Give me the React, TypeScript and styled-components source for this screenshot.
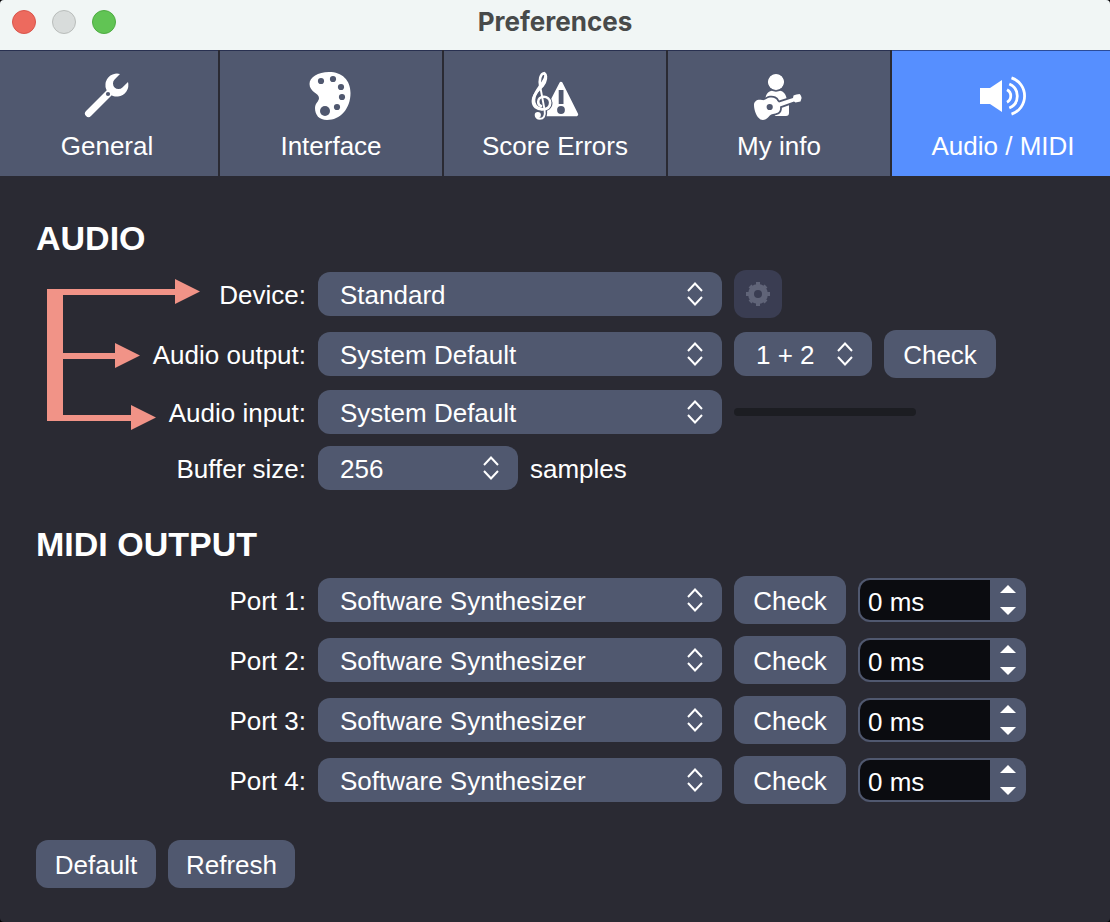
import React, { useState } from "react";
import styled, { createGlobalStyle, ThemeProvider } from "styled-components";

const theme = {
  page: "#2a2a33",
  control: "#50586f",
  controlDisabled: "#3a3d52",
  accent: "#568fff",
  field: "#0b0c10",
  track: "#1c1d22",
  arrow: "#f19387",
  titleBar: "#f1f6f5",
  titleText: "#484a4a",
};

const GlobalStyle = createGlobalStyle`
  *, *::before, *::after { box-sizing: border-box; }
  body {
    margin: 0;
    background: #000;
    color: #fff;
    font: 26px/32px "Liberation Sans", Arial, sans-serif;
  }
  button, input, select {
    margin: 0;
    border: 0;
    color: inherit;
    font: inherit;
  }
`;

const Window = styled.div`
  min-height: 100vh;
  display: flex;
  flex-direction: column;
  overflow: hidden;
  border-radius: 4px;
  background: ${(p) => p.theme.page};
`;

const TitleBar = styled.header`
  display: grid;
  grid-template-columns: 1fr auto 1fr;
  align-items: center;
  height: 50px;
  padding: 0 12px 6px;
  background: ${(p) => p.theme.titleBar};
`;

const WindowButtons = styled.div`
  display: flex;
  gap: 16px;
`;

const WindowButton = styled.button<{ $fill: string; $edge: string }>`
  width: 24px;
  height: 24px;
  padding: 0;
  border: 1px solid ${(p) => p.$edge};
  border-radius: 50%;
  background: ${(p) => p.$fill};
`;

const Title = styled.h1`
  margin: 0;
  color: ${(p) => p.theme.titleText};
  font: 700 26px/32px Inter, sans-serif;
`;

const TabBar = styled.nav`
  display: grid;
  grid-template-columns: repeat(5, 1fr);
  gap: 2px;
  margin: 0 -4px;
`;

const Tab = styled.button<{ $active: boolean }>`
  display: flex;
  flex-direction: column;
  align-items: center;
  gap: 10px;
  padding: 22px 0 14px;
  background: ${(p) => (p.$active ? p.theme.accent : p.theme.control)};
  box-shadow: inset 0 1px rgba(0, 8, 50, 0.5);
  white-space: nowrap;
`;

const TabIcon = styled.svg<{ $active?: boolean }>`
  width: 48px;
  height: 48px;
  overflow: visible;
  fill: #fff;
  --cut: ${(p) => (p.$active ? p.theme.accent : p.theme.control)};
`;

const Content = styled.main`
  display: flex;
  flex-direction: column;
  gap: 36px;
  padding: 44px 36px 34px;
`;

const Section = styled.section`
  display: flex;
  flex-direction: column;
  gap: 14px;
`;

const Heading = styled.h2`
  margin: 0;
  font-size: 34px;
  line-height: 36px;
  font-weight: 700;
`;

const Rows = styled.div`
  position: relative;
  display: flex;
  flex-direction: column;
  gap: 12px;
`;

const Row = styled.div`
  display: flex;
  align-items: center;
  gap: 12px;
`;

const RowLabel = styled.label`
  flex: 0 0 270px;
  padding-top: 2px;
  text-align: right;
`;

const Unit = styled.span`
  padding-top: 2px;
`;

const SelectBox = styled.div<{ $width: number }>`
  position: relative;
  flex: 0 1 ${(p) => p.$width}px;
`;

const SelectField = styled.select`
  display: block;
  width: 100%;
  height: 44px;
  padding: 2px 40px 0 22px;
  border-radius: 12px;
  background: ${(p) => p.theme.control};
  appearance: none;
`;

const Chevrons = styled.svg`
  position: absolute;
  top: 10px;
  right: 19px;
  width: 16px;
  height: 24px;
  fill: none;
  stroke: #fff;
  stroke-width: 2;
  pointer-events: none;
`;

const Button = styled.button<{ $minWidth: number }>`
  min-width: ${(p) => p.$minWidth}px;
  height: 48px;
  padding: 2px 18px 0;
  border-radius: 12px;
  background: ${(p) => p.theme.control};
  white-space: nowrap;
`;

const IconButton = styled.button`
  display: grid;
  place-items: center;
  width: 48px;
  height: 48px;
  padding: 0;
  border-radius: 12px;
  background: ${(p) => p.theme.controlDisabled};
  color: #606478;
`;

const LevelMeter = styled.div`
  flex: 0 1 182px;
  height: 8px;
  border-radius: 4px;
  background: ${(p) => p.theme.track};
`;

const SpinBox = styled.div`
  display: flex;
  flex: 0 1 168px;
  min-width: 0;
  height: 44px;
  padding: 2px 0 2px 2px;
  border-radius: 12px;
  background: ${(p) => p.theme.control};
`;

const SpinField = styled.input`
  flex: 1;
  min-width: 0;
  padding: 4px 0 0 8px;
  border-radius: 10px 0 0 10px;
  background: ${(p) => p.theme.field};
`;

const SpinButtons = styled.div`
  display: flex;
  flex-direction: column;
  width: 36px;
`;

const SpinButton = styled.button`
  display: grid;
  flex: 1;
  place-items: center;
  padding: 0;
  background: none;
  &:first-child {
    padding-bottom: 4px;
  }
  svg {
    width: 16px;
    height: 8px;
    fill: #fff;
  }
`;

const Footer = styled.footer`
  display: flex;
  gap: 12px;
`;

const Callout = styled.svg`
  position: absolute;
  top: 8px;
  left: 10px;
  width: 156px;
  height: 154px;
  fill: ${(p) => p.theme.arrow};
  pointer-events: none;
`;

const cut = { fill: "var(--cut)" };

const WrenchIcon = () => (
  <TabIcon viewBox="0 0 48 48" aria-hidden>
    <path d="M37 2A11.5 11.5 0 1 0 45 10L39.4 15.4A5.5 5.5 0 0 1 31.6 7.6Z" />
    <path d="M5.5 41.5L27 20" stroke="#fff" strokeWidth="7" strokeLinecap="round" />
    <circle cx="25" cy="22" r="2.1" style={cut} />
  </TabIcon>
);

const PaletteIcon = () => (
  <TabIcon viewBox="0 0 48 48" aria-hidden>
    <path d="M22 0C35 0 43.5 8 43.5 21C43.5 37 33 48 20 48C12 48 8 43 8 36C8 31 12 29.5 12 26C12 21 2.5 20 2.5 12C2.5 5 11 0 22 0Z" />
    <g style={cut}>
      <circle cx="14" cy="9" r="3.1" />
      <circle cx="26" cy="7" r="3.1" />
      <circle cx="34" cy="15" r="3.1" />
      <circle cx="35" cy="25" r="3.1" />
      <circle cx="30" cy="35" r="3.1" />
      <circle cx="18" cy="39" r="5" />
    </g>
  </TabIcon>
);

const clefCurl =
  "M9.3 15C7.8 8 9.5 1.6 13 1.2C16.2 3 15.2 10 11.5 14C8 18 1.9 22 1.9 29C1.9 34.5 6 37.4 11 37.4C16 37.4 19.2 35 19.2 30.8C19.2 27 16 24.8 12.8 24.8C9.5 24.8 7.2 27 7.2 29.8C7.2 32 8.3 33.5 10 34";
const clefStem = "M9.3 15L13.6 38C14.6 44 12.5 46.8 8.8 46.8C6.5 46.8 5 45.4 5 43";

const ScoreErrorsIcon = () => (
  <TabIcon viewBox="0 0 48 48" aria-hidden>
    <path d="M30 11.5L45.5 42.5H14Z" stroke="#fff" strokeWidth="3.4" strokeLinejoin="round" />
    <path d="M27.7 18H32.5V32H27.7Z" style={cut} />
    <circle cx="30" cy="38" r="3.9" style={cut} />
    <g fill="none" stroke="var(--cut)" strokeWidth="4.6">
      <path d={clefCurl} />
      <path d={clefStem} />
    </g>
    <g fill="none" stroke="#fff" strokeWidth="2.6" strokeLinecap="round">
      <path d={clefCurl} />
      <path d={clefStem} strokeWidth="1.9" />
      <path d="M14.6 4.5C14.3 9.5 4.5 18 3 26" strokeWidth="3" />
      <path d="M3 26C2.4 32 5 36 11 37" strokeWidth="2.6" />
    </g>
    <circle cx="6.8" cy="43" r="3.1" />
  </TabIcon>
);

const guitarBody =
  "M0 33C0 29 3.5 27 8 28C11 28.8 12.5 26.2 16 25.6C19.5 25 22.5 26.6 23.4 29L25 30.5L39 26L39.5 23.6C41 22.5 44 22.3 45.5 22C46.8 23 47.3 24.4 47.6 26L46.5 29.5L41.5 30.6L40 29.5L26 34.5C26.5 38 25.5 41 21.5 41.4C17.5 41.8 16.5 42.5 14.5 45C12 48 9 48.5 6.5 47.5C2.5 45 0 38 0 33Z";

const GuitaristIcon = () => (
  <TabIcon viewBox="0 0 48 48" aria-hidden>
    <g transform="translate(-1 0)">
      <circle cx="22" cy="10" r="8.1" />
      <path d="M11.5 26C12.5 20.5 15.5 18.5 20 18.5H24C28.500 18.5 31.500 21 32.500 26L35 33V41C35 43 34 44 32 44H21L16 30Z" />
      <circle cx="22" cy="10" r="9" fill="none" stroke="var(--cut)" strokeWidth="1.4" />
      <path d={guitarBody} style={cut} stroke="var(--cut)" strokeWidth="3.6" />
      <path d={guitarBody} />
      <circle cx="15.7" cy="35" r="3.1" style={cut} />
    </g>
  </TabIcon>
);

const SpeakerIcon = () => (
  <TabIcon viewBox="0 0 48 48" aria-hidden $active>
    <path d="M1 16H11L23 8V40L11 32H1Z" />
    <g fill="none" stroke="#fff" strokeWidth="2.8">
      <path d="M32.5 5.8A19.2 19.2 0 0 1 32.5 42.2" />
      <path d="M30.3 12A13 13 0 0 1 30.3 36" />
      <path d="M28 17.8A7 7 0 0 1 28 30.2" />
    </g>
  </TabIcon>
);

const GearIcon = () => (
  <svg width="24" height="24" viewBox="0 0 24 24" aria-hidden>
    <g stroke="currentColor" strokeWidth="4">
      <path d="M12 0V5M12 19V24M0 12H5M19 12H24" />
      <path d="M4 4L7 7M17 17L20 20M4 20L7 17M17 7L20 4" />
    </g>
    <circle cx="12" cy="12" r="7" fill="none" stroke="currentColor" strokeWidth="6" />
  </svg>
);

const tabs = [
  { name: "General", Icon: WrenchIcon },
  { name: "Interface", Icon: PaletteIcon },
  { name: "Score Errors", Icon: ScoreErrorsIcon },
  { name: "My info", Icon: GuitaristIcon },
  { name: "Audio / MIDI", Icon: SpeakerIcon },
];

type SelectProps = { id: string; value: string; width: number; label?: string };

const Select = ({ id, value, width, label }: SelectProps) => (
  <SelectBox $width={width}>
    <SelectField id={id} aria-label={label} defaultValue={value}>
      <option>{value}</option>
    </SelectField>
    <Chevrons viewBox="0 0 16 24" aria-hidden>
      <path d="M1 9L8 1.5L15 9M1 15L8 22.5L15 15" />
    </Chevrons>
  </SelectBox>
);

const DelaySpinner = ({ label }: { label: string }) => {
  const [delay, setDelay] = useState(0);
  return (
    <SpinBox>
      <SpinField aria-label={label} value={`${delay} ms`} onChange={(e) => setDelay(parseInt(e.target.value, 10) || 0)} />
      <SpinButtons>
        <SpinButton type="button" aria-label="Increase" onClick={() => setDelay(delay + 1)}>
          <svg viewBox="0 0 16 8" aria-hidden><path d="M0 8L8 0L16 8Z" /></svg>
        </SpinButton>
        <SpinButton type="button" aria-label="Decrease" onClick={() => setDelay(delay - 1)}>
          <svg viewBox="0 0 16 8" aria-hidden><path d="M0 0L8 8L16 0Z" /></svg>
        </SpinButton>
      </SpinButtons>
    </SpinBox>
  );
};

export default function App() {
  return (
    <ThemeProvider theme={theme}>
      <GlobalStyle />
      <Window>
        <TitleBar>
          <WindowButtons>
            <WindowButton aria-label="Close" $fill="#ed6a5e" $edge="#d9554b" />
            <WindowButton aria-label="Minimize" $fill="#d8dcdb" $edge="#b9bdbb" />
            <WindowButton aria-label="Zoom" $fill="#61c454" $edge="#4eac42" />
          </WindowButtons>
          <Title>Preferences</Title>
        </TitleBar>
        <TabBar>
          {tabs.map(({ name, Icon }) => (
            <Tab key={name} type="button" $active={name === "Audio / MIDI"}>
              <Icon />
              {name}
            </Tab>
          ))}
        </TabBar>
        <Content>
          <Section>
            <Heading>AUDIO</Heading>
            <Rows>
              <Row>
                <RowLabel htmlFor="device">Device:</RowLabel>
                <Select id="device" value="Standard" width={404} />
                <IconButton type="button" aria-label="Device settings" disabled>
                  <GearIcon />
                </IconButton>
              </Row>
              <Row>
                <RowLabel htmlFor="output">Audio output:</RowLabel>
                <Select id="output" value="System Default" width={404} />
                <Select id="channels" value="1 + 2" width={138} label="Output channels" />
                <Button type="button" $minWidth={112}>Check</Button>
              </Row>
              <Row>
                <RowLabel htmlFor="input">Audio input:</RowLabel>
                <Select id="input" value="System Default" width={404} />
                <LevelMeter role="meter" aria-label="Input level" aria-valuenow={0} />
              </Row>
              <Row>
                <RowLabel htmlFor="buffer">Buffer size:</RowLabel>
                <Select id="buffer" value="256" width={200} />
                <Unit>samples</Unit>
              </Row>
              <Callout viewBox="0 0 156 154" aria-hidden>
                <path d="M1 11H129V1L154 13.5L129 26V17H17V75H69V65L94 77.5L69 90V81H17V137H85V127L110 139.5L85 152V143H1Z" />
              </Callout>
            </Rows>
          </Section>
          <Section>
            <Heading>MIDI OUTPUT</Heading>
            <Rows>
              {[1, 2, 3, 4].map((port) => (
                <Row key={port}>
                  <RowLabel htmlFor={`port${port}`}>{`Port ${port}:`}</RowLabel>
                  <Select id={`port${port}`} value="Software Synthesizer" width={404} />
                  <Button type="button" $minWidth={112}>Check</Button>
                  <DelaySpinner label={`Port ${port} delay`} />
                </Row>
              ))}
            </Rows>
          </Section>
          <Footer>
            <Button type="button" $minWidth={120}>Default</Button>
            <Button type="button" $minWidth={120}>Refresh</Button>
          </Footer>
        </Content>
      </Window>
    </ThemeProvider>
  );
}
